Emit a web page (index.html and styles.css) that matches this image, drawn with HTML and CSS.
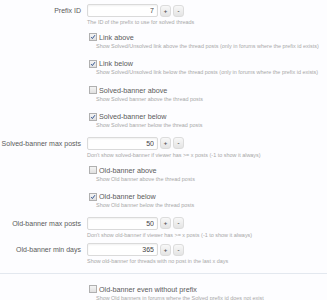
FILE: index.html
```html
<!DOCTYPE html>
<html>
<head>
  <title>Solved Threads Options</title>
  <link rel="stylesheet" href="styles.css">
</head>
<body>
  <div class="options">

    <div class="row">
      <div class="label">Prefix ID</div>
      <div class="field">
        <div class="spin">
          <input class="num" type="text" value="7">
          <span class="btn">+</span><span class="btn">-</span>
        </div>
        <div class="hint">The ID of the prefix to use for solved threads</div>
      </div>
    </div>

    <div class="row check">
      <div class="label"></div>
      <div class="field">
        <div class="cb-line"><span class="cb on"><svg viewBox="0 0 8 8"><path d="M1.5 4.2 L3.2 6 L6.6 1.6" /></svg></span>Link above</div>
        <div class="hint indent">Show Solved/Unsolved link above the thread posts (only in forums where the prefix id exists)</div>
      </div>
    </div>

    <div class="row check">
      <div class="label"></div>
      <div class="field">
        <div class="cb-line"><span class="cb on"><svg viewBox="0 0 8 8"><path d="M1.5 4.2 L3.2 6 L6.6 1.6" /></svg></span>Link below</div>
        <div class="hint indent">Show Solved/Unsolved link below the thread posts (only in forums where the prefix id exists)</div>
      </div>
    </div>

    <div class="row check">
      <div class="label"></div>
      <div class="field">
        <div class="cb-line"><span class="cb"></span>Solved-banner above</div>
        <div class="hint indent">Show Solved banner above the thread posts</div>
      </div>
    </div>

    <div class="row check">
      <div class="label"></div>
      <div class="field">
        <div class="cb-line"><span class="cb on"><svg viewBox="0 0 8 8"><path d="M1.5 4.2 L3.2 6 L6.6 1.6" /></svg></span>Solved-banner below</div>
        <div class="hint indent">Show Solved banner below the thread posts</div>
      </div>
    </div>

    <div class="row">
      <div class="label">Solved-banner max posts</div>
      <div class="field">
        <div class="spin">
          <input class="num" type="text" value="50">
          <span class="btn">+</span><span class="btn">-</span>
        </div>
        <div class="hint">Don't show solved-banner if viewer has &gt;= x posts (-1 to show it always)</div>
      </div>
    </div>

    <div class="row check">
      <div class="label"></div>
      <div class="field">
        <div class="cb-line"><span class="cb"></span>Old-banner above</div>
        <div class="hint indent">Show Old banner above the thread posts</div>
      </div>
    </div>

    <div class="row check">
      <div class="label"></div>
      <div class="field">
        <div class="cb-line"><span class="cb on"><svg viewBox="0 0 8 8"><path d="M1.5 4.2 L3.2 6 L6.6 1.6" /></svg></span>Old-banner below</div>
        <div class="hint indent">Show Old banner below the thread posts</div>
      </div>
    </div>

    <div class="row">
      <div class="label">Old-banner max posts</div>
      <div class="field">
        <div class="spin">
          <input class="num" type="text" value="50">
          <span class="btn">+</span><span class="btn">-</span>
        </div>
        <div class="hint">Don't show old-banner if viewer has &gt;= x posts (-1 to show it always)</div>
      </div>
    </div>

    <div class="row">
      <div class="label">Old-banner min days</div>
      <div class="field">
        <div class="spin">
          <input class="num" type="text" value="365">
          <span class="btn">+</span><span class="btn">-</span>
        </div>
        <div class="hint">Show old-banner for threads with no post in the last x days</div>
      </div>
    </div>

    <div class="divider"></div>

    <div class="row check">
      <div class="label"></div>
      <div class="field">
        <div class="cb-line"><span class="cb"></span>Old-banner even without prefix</div>
        <div class="hint indent">Show Old banners in forums where the Solved prefix id does not exist</div>
      </div>
    </div>

  </div>
</body>
</html>
```

FILE: styles.css
```css
body {
  margin: 0;
  background: #fdfdff;
  font-family: "Liberation Sans", Arial, sans-serif;
  color: #555;
}
.options { padding-top: 4px; }

.row { display: flex; height: 26.6px; }
.label {
  width: 81px;
  flex: none;
  text-align: right;
  font-size: 7px;
  line-height: 13px;
  color: #5a5a5a;
}
.field { margin-left: 6px; flex: 1; min-width: 0; }

.spin { display: flex; align-items: center; height: 13px; }
.num {
  box-sizing: border-box;
  width: 71px;
  height: 13px;
  margin: 0;
  padding: 0 3px;
  border: 1px solid #dadada;
  border-radius: 2px;
  background: #fff;
  box-shadow: inset 0 1px 2px #f0f0f0;
  font-family: inherit;
  font-size: 7px;
  text-align: right;
  color: #444;
}
.btn {
  box-sizing: border-box;
  width: 11px;
  height: 12px;
  margin-left: 2px;
  border: 1px solid #dcdcdc;
  border-radius: 3px;
  background: linear-gradient(#f8f8f8, #e4e4e4);
  font-size: 6px;
  font-weight: bold;
  line-height: 10px;
  text-align: center;
  color: #555;
}

.hint {
  margin-top: 2px;
  font-size: 5.45px;
  line-height: 7px;
  color: #a8a8a8;
  white-space: nowrap;
}
.hint.indent { margin-left: 9px; margin-top: 0; }

.check .field { padding-top: 1px; }
.cb-line {
  display: flex;
  align-items: center;
  height: 11px;
  font-size: 7.2px;
  color: #5a5a5a;
}
.cb {
  box-sizing: border-box;
  width: 8px;
  height: 8px;
  margin: 0 2px 0 2px;
  border: 1px solid #b0b0b0;
  background: linear-gradient(#f4f4f4, #e0e0e0);
  flex: none;
}
.cb svg { display: block; width: 6px; height: 6px; }
.cb svg path { fill: none; stroke: #2a4e8c; stroke-width: 1.3; }

.divider {
  height: 1px;
  margin: 3px 0 9px;
  background: #e3e8ef;
}
```
